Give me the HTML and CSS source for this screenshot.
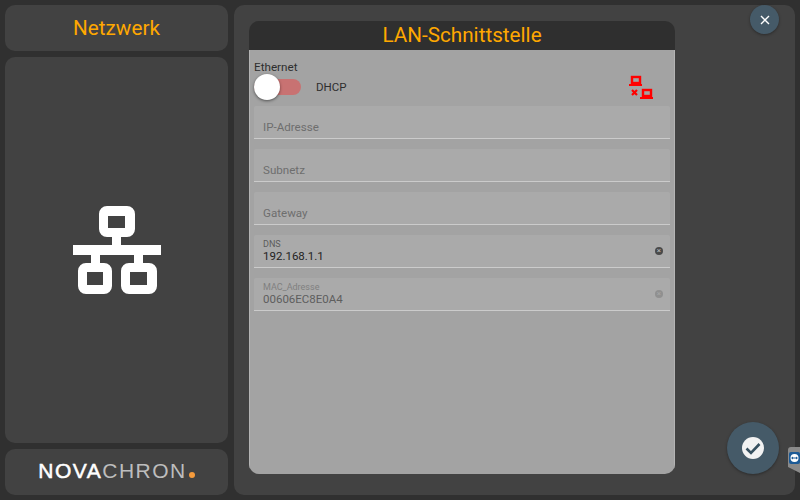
FILE: index.html
```html
<!DOCTYPE html>
<html lang="de">
<head>
    <meta charset="UTF-8">
    <title>Netzwerk</title>
    <link rel="stylesheet" href="styles.css">
</head>
<body>
    <div class="screen">
        <div class="sidebar">
            <div class="card title-card">Netzwerk</div>
            <div class="card icon-card">
                <svg class="net-icon" width="88" height="88" viewBox="0 0 88 88">
                    <path fill="#fff" fill-rule="evenodd" d="M34 0h20a8 8 0 0 1 8 8v15a8 8 0 0 1-8 8h-6v8h40v10H70v8h6a8 8 0 0 1 8 8v15a8 8 0 0 1-8 8H56a8 8 0 0 1-8-8V65a8 8 0 0 1 8-8h5v-8H27v8h4a8 8 0 0 1 8 8v15a8 8 0 0 1-8 8H13a8 8 0 0 1-8-8V65a8 8 0 0 1 8-8h5v-8H0V39h39v-8h-5a8 8 0 0 1-8-8V8a8 8 0 0 1 8-8zM35 10v12h17V10zM14 66v13h16V66zM57 66v13h17V66z"/>
                </svg>
            </div>
            <div class="card logo-card">
                <span class="logo"><span class="logo-nova">NOVA</span><span class="logo-chron">CHRON</span><i class="logo-dot"></i></span>
            </div>
        </div>
        <div class="main">
            <div class="dialog">
                <div class="dialog-head">LAN-Schnittstelle</div>
                <div class="dialog-body">
                    <div class="eth-label">Ethernet</div>
                    <div class="eth-row">
                        <div class="toggle"><div class="knob"></div></div>
                        <span class="dhcp">DHCP</span>
                        <svg class="link-icon" width="24" height="25" viewBox="0 0 24 25">
                            <g fill="none" stroke="#f00">
                                <rect x="3" y="2" width="8" height="6" stroke-width="2.400"/>
                                <rect x="14" y="15" width="8" height="6" stroke-width="2.400"/>
                                <path stroke-width="2" d="M0 10h13M11 23h13"/>
                                <path stroke-width="2.200" d="M3 15l5 5M8 15l-5 5"/>
                            </g>
                        </svg>
                    </div>
                    <div class="fields">
                        <div class="field empty"><span class="hint">IP-Adresse</span></div>
                        <div class="field empty"><span class="hint">Subnetz</span></div>
                        <div class="field empty"><span class="hint">Gateway</span></div>
                        <div class="field">
                            <span class="small-label">DNS</span>
                            <span class="value">192.168.1.1</span>
                            <i class="clear">×</i>
                        </div>
                        <div class="field disabled">
                            <span class="small-label">MAC_Adresse</span>
                            <span class="value">00606EC8E0A4</span>
                            <i class="clear">×</i>
                        </div>
                    </div>
                </div>
            </div>
        </div>
    </div>

    <button class="round-btn close-btn">
        <svg width="10" height="10" viewBox="0 0 10 10"><path d="M1 1l8 8M9 1l-8 8" stroke="#fff" stroke-width="1.400"/></svg>
    </button>
    <button class="round-btn ok-btn">
        <span class="ok-inner">
            <svg width="16" height="13" viewBox="0 0 16 13"><path d="M1.500 6.500l4.500 4.500 8.500-9" fill="none" stroke="#37505f" stroke-width="2.600"/></svg>
        </span>
    </button>
    <div class="side-tab">
        <svg width="11" height="12" viewBox="0 0 11 12">
            <rect width="11" height="12" rx="2" fill="#1c5a96"/>
            <circle cx="5.500" cy="6" r="4" fill="#fff"/>
            <path d="M2 6l2-1.500v1h3v-1l2 1.500-2 1.500v-1H4v1z" fill="#1c5a96"/>
        </svg>
    </div>
</body>
</html>
```

FILE: styles.css
```css
* {
    margin: 0;
    padding: 0;
    box-sizing: border-box;
}

body {
    width: 800px;
    height: 500px;
    overflow: hidden;
    background: #303030;
    font-family: Roboto, sans-serif;
    position: relative;
}

.screen {
    display: flex;
    gap: 6px;
    height: 500px;
    padding: 5px;
}

.sidebar {
    width: 223px;
    display: flex;
    flex-direction: column;
    gap: 6px;
}

.card {
    background: #424242;
    border-radius: 10px;
    display: flex;
    align-items: center;
    justify-content: center;
}

.title-card {
    height: 46px;
    color: #ffa800;
    font-size: 20.700px;
}

.icon-card {
    flex: 1;
}

.logo-card {
    height: 46px;
}

.logo {
    display: flex;
    align-items: baseline;
    font-family: "Liberation Sans", sans-serif;
    font-size: 21px;
    line-height: 20px;
    letter-spacing: 1.500px;
    margin-bottom: 3px;
}

.logo-nova {
    color: #fff;
    -webkit-text-stroke: 0.500px #fff;
}

.logo-chron {
    color: #bdbdbd;
}

.logo-dot {
    width: 6px;
    height: 6px;
    margin-left: 2px;
    border-radius: 50%;
    background: #f59b3c;
}

.main {
    flex: 1;
    background: #424242;
    border-radius: 10px;
    padding: 16px 120px 20px 15px;
}

.dialog {
    width: 426px;
    height: 453px;
    display: flex;
    flex-direction: column;
    border-radius: 10px;
    overflow: hidden;
}

.dialog-head {
    height: 29px;
    background: #2f2f2f;
    color: #ffa800;
    font-size: 20.700px;
    line-height: 29px;
    text-align: center;
}

.dialog-body {
    flex: 1;
    background: #a3a3a3;
    padding: 10px 5px 0;
    border: 1px solid #b4b4b4;
    border-width: 0 1px;
}

.eth-label {
    font-size: 11.700px;
    line-height: 14px;
    color: #2e2e2e;
    margin-left: -1px;
}

.eth-row {
    display: flex;
    align-items: center;
    height: 25px;
    margin-left: -1px;
    position: relative;
    margin-bottom: 7px;
}

.toggle {
    width: 47px;
    height: 16px;
    border-radius: 8px;
    background: #c87272;
    position: relative;
}

.knob {
    position: absolute;
    left: 0;
    top: -5px;
    width: 26px;
    height: 26px;
    border-radius: 50%;
    background: #fff;
    box-shadow: 0 1px 3px rgba(0, 0, 0, 0.5);
}

.dhcp {
    margin-left: 15px;
    font-size: 11.500px;
    color: #2e2e2e;
}

.link-icon {
    position: absolute;
    right: 16px;
    top: 1px;
}

.fields {
    display: flex;
    flex-direction: column;
    gap: 10px;
    margin-left: -1px;
    margin-right: -1px;
}

.field {
    position: relative;
    height: 33px;
    display: flex;
    flex-direction: column;
    padding: 4px 9px 0;
    background: #aaaaaa;
    border-bottom: 1px solid #cbcbcb;
    border-radius: 2px 2px 0 0;
}

.field.empty {
    justify-content: flex-end;
    padding-bottom: 4px;
}

.hint {
    font-size: 11.600px;
    line-height: 14px;
    color: #6e6e6e;
}

.small-label {
    font-size: 9px;
    line-height: 10px;
    color: #5c5c5c;
}

.value {
    font-size: 11.500px;
    line-height: 14px;
    color: #1f1f1f;
}

.clear {
    position: absolute;
    right: 7px;
    top: 12px;
    width: 8px;
    height: 8px;
    border-radius: 50%;
    background: #4a4a4a;
    color: #bbb;
    font-size: 8px;
    font-style: normal;
    line-height: 8px;
    text-align: center;
}

.disabled .small-label {
    color: #808080;
}

.disabled .value {
    color: #5e5e5e;
}

.disabled .clear {
    background: #909090;
    color: #a6a6a6;
}

.round-btn {
    position: absolute;
    border: none;
    border-radius: 50%;
    background: #455a68;
    box-shadow: 0 1px 3px rgba(0, 0, 0, 0.35);
    display: flex;
    align-items: center;
    justify-content: center;
}

.close-btn {
    left: 750px;
    top: 5px;
    width: 29px;
    height: 29px;
}

.ok-btn {
    left: 727px;
    top: 422px;
    width: 52px;
    height: 52px;
}

.ok-inner {
    width: 22px;
    height: 22px;
    border-radius: 50%;
    background: #f2f2f2;
    display: flex;
    align-items: center;
    justify-content: center;
}

.side-tab {
    position: absolute;
    left: 788px;
    top: 447px;
    width: 12px;
    height: 26px;
    background: #8a8a8a;
    border-radius: 3px 0 0 3px;
    clip-path: polygon(0 0, 100% 0, 100% 100%, 0 77%);
    padding: 2px 0 0 1px;
}
```
